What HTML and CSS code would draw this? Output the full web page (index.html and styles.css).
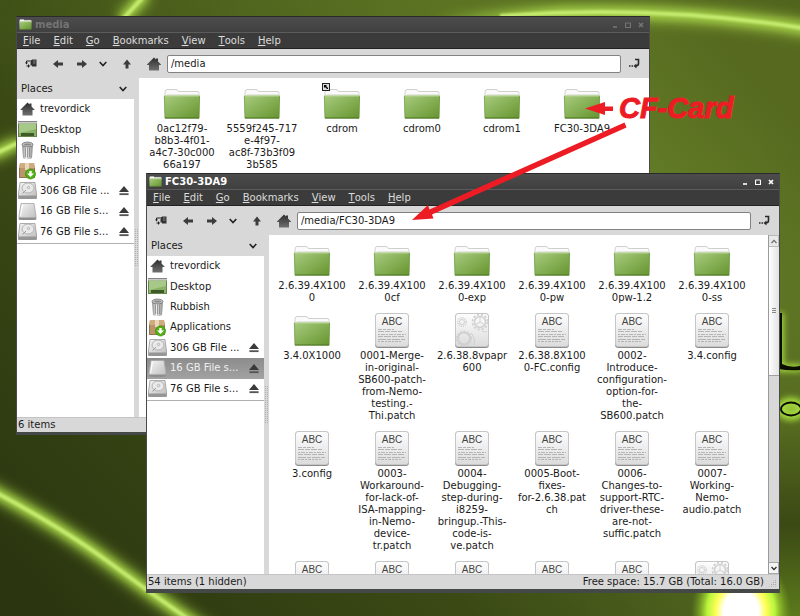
FILE: index.html
```html
<!DOCTYPE html>
<html lang="en">
<head>
<meta charset="utf-8">
<title>File Manager</title>
<link rel="stylesheet" href="styles.css">
</head>
<body>
<svg class="sprite" aria-hidden="true">
  <defs>
    <linearGradient id="g-folder" x1="0" y1="0" x2="1" y2="1"><stop offset="0" stop-color="#a9cc82"/><stop offset=".5" stop-color="#86b055"/><stop offset="1" stop-color="#66932f"/></linearGradient>
    <linearGradient id="g-paper" x1="0" y1="0" x2="0" y2="1"><stop offset="0" stop-color="#fdfdfd"/><stop offset="1" stop-color="#dcdcdc"/></linearGradient>
    <linearGradient id="g-home" x1="0" y1="0" x2="0" y2="1"><stop offset="0" stop-color="#2c2c2c"/><stop offset="1" stop-color="#707070"/></linearGradient>
    <linearGradient id="g-metal" x1="0" y1="0" x2="1" y2="0"><stop offset="0" stop-color="#888"/><stop offset=".4" stop-color="#eee"/><stop offset="1" stop-color="#888"/></linearGradient>
    <linearGradient id="g-drive" x1="0" y1="0" x2="1" y2="1"><stop offset="0" stop-color="#f6f6f6"/><stop offset="1" stop-color="#bcbcbc"/></linearGradient>
  </defs>
  <symbol id="folder" viewBox="0 0 38 36">
    <path d="M2 10V6.500Q2 3.500 4 3.500H13Q14.500 3.500 15.500 5.500H35Q36 5.500 36 7.500V12H2Z" fill="#fafafa" stroke="#cfcfcf"/>
    <path d="M4 8.500H35" stroke="#e6e6e6"/>
    <path d="M.800 10.500Q.800 9.500 2 9.500H36Q37 9.500 37 10.500L36.300 32.500H1.700Z" fill="url(#g-folder)"/>
    <path d="M1.500 10H36.500" stroke="#b9d696"/>
    <path d="M2 32H36" stroke="#4d7424"/>
    <path d="M1.500 10L2 32M36.500 10L36 32" stroke="#6b8f42" stroke-opacity=".5" fill="none"/>
  </symbol>
  <symbol id="paper" viewBox="0 0 38 36">
    <rect x="2" y="1" width="34" height="34" rx="3.500" fill="#8b8b8b"/>
    <rect x="2" y="0" width="34" height="34" rx="3.500" fill="#c6c6c6"/>
    <rect x="3" y="1" width="32" height="32" rx="2.500" fill="url(#g-paper)"/>
  </symbol>
  <symbol id="textfile" viewBox="0 0 38 36">
    <use href="#paper"/>
    <g stroke="#b4b4b4" stroke-width="1" fill="none">
      <path d="M5 16.500H21" stroke-dasharray="4 1 3 1"/><path d="M5 18.500H29" stroke-dasharray="6 1 5 1"/><path d="M5 21.500H33" stroke-dasharray="2 1 4 1"/><path d="M5 23.500H31" stroke-dasharray="5 1 7 1"/><path d="M5 26.500H32" stroke-dasharray="8 1 4 1"/><path d="M5 28.500H28" stroke-dasharray="2 1 3 1"/>
    </g>
  </symbol>
  <symbol id="binary" viewBox="0 0 38 36">
    <use href="#paper"/>
    <g fill="none" stroke="#d0d0d0">
      <circle cx="9" cy="9" r="2.500"/><circle cx="9" cy="9" r="4.200" stroke-dasharray="1 1.200" stroke-width="1.800"/>
      <circle cx="27" cy="9" r="5.500" stroke-width="1.500"/><circle cx="27" cy="9" r="7.500" stroke-dasharray="2.200 1.800" stroke-width="1.800"/><path d="M27 9V3.500M27 9L32 12M27 9L22 12"/>
      <circle cx="11" cy="25.500" r="6" stroke-width="2"/><circle cx="11" cy="25.500" r="7.400" stroke-dasharray="1.800 1.600" stroke-width="1.400"/>
      <path d="M21 32Q23 26 18 20M29 18Q32 20 34 18"/>
    </g>
  </symbol>
  <symbol id="home" viewBox="0 0 14 14"><path d="M7 .500L0 7.500V8H2V13.500H12V8H14V7.500L11 4.500V1.500H9V2.500Z" fill="url(#g-home)"/></symbol>
  <symbol id="connect" viewBox="0 0 12 10"><path d="M5.500 1.500H7V1H11.500V8H7V7H5.500Z" fill="#333"/><path d="M8 2.500H10.500M8 4.500H10.500" stroke="#999" stroke-width=".8"/><path d="M5 2.500H1.500V5M1.500 7.500H5M3.500 6V9" stroke="#222" fill="none"/><path d="M0 4H3L1.500 6Z" fill="#222"/></symbol>
  <symbol id="left" viewBox="0 0 10 10"><path d="M0 5L5 1V3.500H10V6.500H5V9Z" fill="#3c3c3c"/></symbol>
  <symbol id="right" viewBox="0 0 10 10"><path d="M10 5L5 1V3.500H0V6.500H5V9Z" fill="#3c3c3c"/></symbol>
  <symbol id="up" viewBox="0 0 10 10"><path d="M5 .500L9 5.500H6.500V9.500H3.500V5.500H1Z" fill="#3c3c3c"/></symbol>
  <symbol id="down" viewBox="0 0 8 6"><path d="M.700 1L4 4.500L7.300 1" fill="none" stroke="#222" stroke-width="1.600"/></symbol>
  <symbol id="go" viewBox="0 0 12 10"><path d="M6 1H9.500V5Q9.500 7.500 6.500 7.500" fill="none" stroke="#2a2a2a" stroke-width="1.600"/><path d="M7.500 5V10L4.500 7.500Z" fill="#2a2a2a"/><path d="M0 7.500H1.500M2.500 7.500H4" stroke="#2a2a2a" stroke-width="1.500"/></symbol>
  <symbol id="desktop" viewBox="0 0 19 19"><rect x=".5" y="1.500" width="18" height="15" fill="#8ab267" stroke="#67864c"/><path d="M1 4H18V9L1 13Z" fill="#a6c988"/><rect x="0" y="1" width="19" height="2.500" fill="#c8c8c8"/><path d="M0 1.500H19" stroke="#858585"/><rect x="3" y="13" width="13" height="3" fill="#3d5a28"/></symbol>
  <symbol id="trash" viewBox="0 0 19 19"><path d="M4 3L5 17Q9.500 19.500 14 17L15 3Z" fill="url(#g-metal)"/><path d="M7.500 6.500V16M9.500 6.500V16.500M11.500 6.500V16" stroke="#888" stroke-width=".8"/><ellipse cx="9.500" cy="3.500" rx="5.500" ry="2.400" fill="#c4c4c4" stroke="#6e6e6e" stroke-width=".8"/><ellipse cx="9.500" cy="3.500" rx="3.500" ry="1.100" fill="#8a8a8a"/></symbol>
  <symbol id="apps" viewBox="0 0 19 19"><path d="M2 2H16L17 7V17H1V7Z" fill="#b9966a"/><path d="M2 2H16L17 7H1Z" fill="#cfac80"/><path d="M7 2H11V9H7Z" fill="#e8d7b8"/><path d="M1.500 7V16.500H16.500V7" fill="none" stroke="#94744c"/><circle cx="12.500" cy="13" r="5" fill="#55b016" stroke="#3c8a0a" stroke-width=".7"/><path d="M11.300 10H13.700V12.500H16L12.500 16L9 12.500H11.300Z" fill="#fff"/></symbol>
  <symbol id="card" viewBox="0 0 19 19"><path d="M3 1.500H16L18 14V17.500H1V14Z" fill="url(#g-drive)" stroke="#a5a5a5" stroke-width=".8"/><path d="M1 15.500H18V17.500Q9 18.500 1 17.500Z" fill="#8e8e8e"/><path d="M4.500 3L2.500 14" stroke="#fff"/></symbol>
  <symbol id="disk" viewBox="0 0 19 19"><path d="M2 1.500H17L18.500 13V17.500H.500V13Z" fill="url(#g-drive)" stroke="#9a9a9a" stroke-width=".8"/><path d="M.500 14.500H18.500V17.500Q9 18.500 .500 17.500Z" fill="#969696"/><ellipse cx="10" cy="7" rx="6" ry="5" fill="#e9e9e9" stroke="#b4b4b4"/><circle cx="10.500" cy="6.500" r="1.200" fill="none" stroke="#aaa" stroke-width=".8"/><path d="M8 9L4.500 12.500" stroke="#999" fill="none"/></symbol>
  <symbol id="eject" viewBox="0 0 12 12"><path d="M6 1L11.500 7.500H.500Z" fill="#3a3a3a"/><rect x="1" y="9" width="10" height="2" fill="#555"/></symbol>
  <symbol id="min" viewBox="0 0 6 6"><path d="M1 5H5" stroke="currentColor" stroke-width="1.600"/></symbol>
  <symbol id="max" viewBox="0 0 6 6"><path d="M.500 1H5.500M.500 1V5.500H5.500V1" fill="none" stroke="currentColor" stroke-width="1.200"/></symbol>
  <symbol id="close" viewBox="0 0 6 6"><path d="M1 1L5 5M5 1L1 5" stroke="currentColor" stroke-width="1.700"/></symbol>
</svg>

<svg class="wallpaper" viewBox="0 0 800 616" preserveAspectRatio="none" aria-hidden="true">
  <defs>
    <linearGradient id="w-base" x1="0" y1=".9" x2="1" y2=".2"><stop offset="0" stop-color="#2b3610"/><stop offset=".35" stop-color="#3b4a15"/><stop offset=".8" stop-color="#647f28"/><stop offset="1" stop-color="#56691f"/></linearGradient>
    <linearGradient id="w-top" x1="0" y1="0" x2="1" y2="0"><stop offset="0" stop-color="#3f5016"/><stop offset=".5" stop-color="#566c20"/><stop offset="1" stop-color="#4e611c"/></linearGradient>
    <linearGradient id="w-right" x1="0" y1="0" x2="0" y2="1"><stop offset="0" stop-color="#5a7123" stop-opacity="0"/><stop offset=".55" stop-color="#55691f"/><stop offset=".78" stop-color="#3b4914"/><stop offset="1" stop-color="#5c7a1c"/></linearGradient>
    <linearGradient id="w-arc" gradientUnits="userSpaceOnUse" x1="430" y1="0" x2="560" y2="0"><stop offset="0" stop-color="#90b83a" stop-opacity="0"/><stop offset="1" stop-color="#9cc643"/></linearGradient>
    <radialGradient id="w-flare"><stop offset="0" stop-color="#fff"/><stop offset=".35" stop-color="#fff"/><stop offset=".5" stop-color="#ffff58"/><stop offset=".68" stop-color="#b8f53a"/><stop offset="1" stop-color="#7aa51f" stop-opacity="0"/></radialGradient>
    <filter id="b8" x="-50%" y="-50%" width="200%" height="200%"><feGaussianBlur stdDeviation="7"/></filter>
    <filter id="b3" x="-50%" y="-50%" width="200%" height="200%"><feGaussianBlur stdDeviation="3"/></filter>
    <filter id="b1" x="-50%" y="-50%" width="200%" height="200%"><feGaussianBlur stdDeviation="1"/></filter>
  </defs>
  <rect width="800" height="616" fill="url(#w-base)"/>
  <rect width="800" height="16" fill="url(#w-top)" opacity=".6"/>
  <rect x="780" y="200" width="20" height="416" fill="url(#w-right)"/>
  <g fill="none">
    <g stroke="#90b83a" stroke-width="14" filter="url(#b8)"><path d="M122 20L146 -6M-10 156L20 142M-20 484Q60 526 110 563T210 634"/><path d="M430 22Q640 -1 820 31" stroke="url(#w-arc)"/></g>
    <g stroke="#9cc643" stroke-width="9" filter="url(#b3)"><path d="M122 20L146 -6M-10 156L20 142M-20 484Q60 526 110 563T210 634"/><path d="M430 22Q640 -1 820 31" stroke="url(#w-arc)"/></g>
    <path d="M122 20L146 -6M-10 156L20 142M-20 484Q60 526 110 563T210 634M500 16Q660 3 820 31" stroke="#c6ec70" stroke-width="4" filter="url(#b1)"/>
  </g>
  <ellipse cx="741" cy="612" rx="50" ry="60" fill="url(#w-flare)"/>
  <g filter="url(#b3)" fill="none" stroke="#a9e23c" stroke-width="7"><path d="M780 313V368L802 368"/><ellipse cx="791" cy="409" rx="11" ry="8" fill="#8fb838"/></g>
  <path d="M779 313H782V364Q790 368 800 366V370Q788 371 779 369Z" fill="#0a0d02"/>
  <ellipse cx="791" cy="409" rx="10" ry="6.500" fill="none" stroke="#0a0d02" stroke-width="1.800"/>
</svg>

<section class="window window-back inactive" aria-label="media">
  <header class="titlebar">
    <svg class="title-icon"><use href="#folder"/></svg><h1>media</h1>
    <div class="controls"><button aria-label="Minimise"><svg><use href="#min"/></svg></button><button aria-label="Maximise"><svg><use href="#max"/></svg></button><button aria-label="Close"><svg><use href="#close"/></svg></button></div>
  </header>
  <nav class="menubar"><button><u>F</u>ile</button><button><u>E</u>dit</button><button><u>G</u>o</button><button><u>B</u>ookmarks</button><button><u>V</u>iew</button><button><u>T</u>ools</button><button><u>H</u>elp</button></nav>
  <form class="toolbar">
    <button type="button" aria-label="Connect"><svg class="i12"><use href="#connect"/></svg></button><button type="button" aria-label="Back"><svg class="i10"><use href="#left"/></svg></button><button type="button" aria-label="Forward"><svg class="i10"><use href="#right"/></svg></button><button type="button" aria-label="History"><svg class="i8"><use href="#down"/></svg></button><button type="button" aria-label="Up"><svg class="i10"><use href="#up"/></svg></button><button type="button" aria-label="Home"><svg class="i14"><use href="#home"/></svg></button>
    <input type="text" aria-label="Location" value="/media">
    <button type="button" aria-label="Go"><svg class="i12"><use href="#go"/></svg></button>
  </form>
  <div class="panes">
    <aside class="sidebar">
      <button class="places">Places<svg class="i8"><use href="#down"/></svg></button>
      <ul>
        <li><svg class="i14"><use href="#home"/></svg><a href="#home">trevordick</a></li>
        <li><svg><use href="#desktop"/></svg><a href="#desktop">Desktop</a></li>
        <li><svg><use href="#trash"/></svg><a href="#trash">Rubbish</a></li>
        <li><svg><use href="#apps"/></svg><a href="#apps">Applications</a></li>
        <li><svg><use href="#disk"/></svg><a href="#disk">306 GB File ...</a><button aria-label="Eject"><svg class="i12"><use href="#eject"/></svg></button></li>
        <li><svg><use href="#card"/></svg><a href="#card">16 GB File s...</a><button aria-label="Eject"><svg class="i12"><use href="#eject"/></svg></button></li>
        <li><svg><use href="#disk"/></svg><a href="#disk">76 GB File s...</a><button aria-label="Eject"><svg class="i12"><use href="#eject"/></svg></button></li>
      </ul>
    </aside>
    <div class="gutter"><i></i></div>
    <main class="files">
      <figure><svg><use href="#folder"/></svg><figcaption>0ac12f79-<br>b8b3-4f01-<br>a4c7-30c000<br>66a197</figcaption></figure>
      <figure><svg><use href="#folder"/></svg><figcaption>5559f245-717<br>e-4f97-<br>ac8f-73b3f09<br>3b585</figcaption></figure>
      <figure><svg><use href="#folder"/></svg><svg class="link-badge" viewBox="0 0 8 8"><rect width="8" height="8" fill="#222"/><rect x="1" y="1" width="6" height="6" fill="#ddd"/><path d="M2 2H5L4 3L6 5V6H5L3 4L2 5Z" fill="#000"/></svg><figcaption>cdrom</figcaption></figure>
      <figure><svg><use href="#folder"/></svg><figcaption>cdrom0</figcaption></figure>
      <figure><svg><use href="#folder"/></svg><figcaption>cdrom1</figcaption></figure>
      <figure><svg><use href="#folder"/></svg><figcaption>FC30-3DA9</figcaption></figure>
    </main>
  </div>
  <footer class="status"><span>6 items</span></footer>
</section>

<section class="window window-front" aria-label="FC30-3DA9">
  <header class="titlebar">
    <svg class="title-icon"><use href="#folder"/></svg><h1>FC30-3DA9</h1>
    <div class="controls"><button aria-label="Minimise"><svg><use href="#min"/></svg></button><button aria-label="Maximise"><svg><use href="#max"/></svg></button><button aria-label="Close"><svg><use href="#close"/></svg></button></div>
  </header>
  <nav class="menubar"><button><u>F</u>ile</button><button><u>E</u>dit</button><button><u>G</u>o</button><button><u>B</u>ookmarks</button><button><u>V</u>iew</button><button><u>T</u>ools</button><button><u>H</u>elp</button></nav>
  <form class="toolbar">
    <button type="button" aria-label="Connect"><svg class="i12"><use href="#connect"/></svg></button><button type="button" aria-label="Back"><svg class="i10"><use href="#left"/></svg></button><button type="button" aria-label="Forward"><svg class="i10"><use href="#right"/></svg></button><button type="button" aria-label="History"><svg class="i8"><use href="#down"/></svg></button><button type="button" aria-label="Up"><svg class="i10"><use href="#up"/></svg></button><button type="button" aria-label="Home"><svg class="i14"><use href="#home"/></svg></button>
    <input type="text" aria-label="Location" value="/media/FC30-3DA9">
    <button type="button" aria-label="Go"><svg class="i12"><use href="#go"/></svg></button>
  </form>
  <div class="panes">
    <aside class="sidebar">
      <button class="places">Places<svg class="i8"><use href="#down"/></svg></button>
      <ul>
        <li><svg class="i14"><use href="#home"/></svg><a href="#home">trevordick</a></li>
        <li><svg><use href="#desktop"/></svg><a href="#desktop">Desktop</a></li>
        <li><svg><use href="#trash"/></svg><a href="#trash">Rubbish</a></li>
        <li><svg><use href="#apps"/></svg><a href="#apps">Applications</a></li>
        <li><svg><use href="#disk"/></svg><a href="#disk">306 GB File ...</a><button aria-label="Eject"><svg class="i12"><use href="#eject"/></svg></button></li>
        <li class="selected"><svg><use href="#card"/></svg><a href="#card">16 GB File s...</a><button aria-label="Eject"><svg class="i12"><use href="#eject"/></svg></button></li>
        <li><svg><use href="#disk"/></svg><a href="#disk">76 GB File s...</a><button aria-label="Eject"><svg class="i12"><use href="#eject"/></svg></button></li>
      </ul>
    </aside>
    <div class="gutter"><i></i></div>
    <main class="files">
      <figure><svg><use href="#folder"/></svg><figcaption>2.6.39.4X100<br>0</figcaption></figure>
      <figure><svg><use href="#folder"/></svg><figcaption>2.6.39.4X100<br>0cf</figcaption></figure>
      <figure><svg><use href="#folder"/></svg><figcaption>2.6.39.4X100<br>0-exp</figcaption></figure>
      <figure><svg><use href="#folder"/></svg><figcaption>2.6.39.4X100<br>0-pw</figcaption></figure>
      <figure><svg><use href="#folder"/></svg><figcaption>2.6.39.4X100<br>0pw-1.2</figcaption></figure>
      <figure><svg><use href="#folder"/></svg><figcaption>2.6.39.4X100<br>0-ss</figcaption></figure>
      <figure><svg><use href="#folder"/></svg><figcaption>3.4.0X1000</figcaption></figure>
      <figure><svg><use href="#textfile"/></svg><span class="abc">ABC</span><figcaption>0001-Merge-<br>in-original-<br>SB600-patch-<br>from-Nemo-<br>testing.-<br>Thi.patch</figcaption></figure>
      <figure><svg><use href="#binary"/></svg><figcaption>2.6.38.8vpapr<br>600</figcaption></figure>
      <figure><svg><use href="#textfile"/></svg><span class="abc">ABC</span><figcaption>2.6.38.8X100<br>0-FC.config</figcaption></figure>
      <figure><svg><use href="#textfile"/></svg><span class="abc">ABC</span><figcaption>0002-<br>Introduce-<br>configuration-<br>option-for-<br>the-<br>SB600.patch</figcaption></figure>
      <figure><svg><use href="#textfile"/></svg><span class="abc">ABC</span><figcaption>3.4.config</figcaption></figure>
      <figure><svg><use href="#textfile"/></svg><span class="abc">ABC</span><figcaption>3.config</figcaption></figure>
      <figure><svg><use href="#textfile"/></svg><span class="abc">ABC</span><figcaption>0003-<br>Workaround-<br>for-lack-of-<br>ISA-mapping-<br>in-Nemo-<br>device-<br>tr.patch</figcaption></figure>
      <figure><svg><use href="#textfile"/></svg><span class="abc">ABC</span><figcaption>0004-<br>Debugging-<br>step-during-<br>i8259-<br>bringup.-This-<br>code-is-<br>ve.patch</figcaption></figure>
      <figure><svg><use href="#textfile"/></svg><span class="abc">ABC</span><figcaption>0005-Boot-<br>fixes-<br>for-2.6.38.pat<br>ch</figcaption></figure>
      <figure><svg><use href="#textfile"/></svg><span class="abc">ABC</span><figcaption>0006-<br>Changes-to-<br>support-RTC-<br>driver-these-<br>are-not-<br>suffic.patch</figcaption></figure>
      <figure><svg><use href="#textfile"/></svg><span class="abc">ABC</span><figcaption>0007-<br>Working-<br>Nemo-<br>audio.patch</figcaption></figure>
      <figure><svg><use href="#textfile"/></svg><span class="abc">ABC</span></figure>
      <figure><svg><use href="#textfile"/></svg><span class="abc">ABC</span></figure>
      <figure><svg><use href="#textfile"/></svg><span class="abc">ABC</span></figure>
      <figure><svg><use href="#textfile"/></svg><span class="abc">ABC</span></figure>
      <figure><svg><use href="#textfile"/></svg><span class="abc">ABC</span></figure>
      <figure><svg><use href="#binary"/></svg></figure>
    </main>
    <div class="scrollbar">
      <button class="faded" aria-label="Scroll up"><svg class="flip"><use href="#down"/></svg></button>
      <div class="track"><div class="thumb"><i></i></div></div>
      <button aria-label="Scroll down"><svg><use href="#down"/></svg></button>
    </div>
  </div>
  <footer class="status"><span>54 items (1 hidden)</span><span class="space">Free space: 15.7 GB (Total: 16.0 GB)</span><i class="grip"></i></footer>
</section>

<svg class="annotation" viewBox="0 0 800 616" role="img" aria-label="CF-Card">
  <g fill="#ed1c24" stroke="none">
    <path d="M585 108.500L605 102V106.500H613V111H605V115Z"/>
    <path d="M412 220L428 205L429.500 209.500L624.500 122.500L626.500 127.500L432 214.500L433.500 218.500Z"/>
    <text x="619" y="118" class="note">CF-Card</text>
  </g>
</svg>
</body>
</html>
```
FILE: styles.css
```css
* { box-sizing: border-box; }
html, body { height: 100%; }
body {
  margin: 0;
  position: relative;
  overflow: hidden;
  font: 10px/12px "DejaVu Sans", sans-serif;
  color: #1a1a1a;
  background: #3b4a15;
}
button {
  font: inherit;
  color: inherit;
  background: none;
  border: 0;
  padding: 0;
  display: flex;
  align-items: center;
  justify-content: center;
}
svg { display: block; flex: none; }
.sprite { position: absolute; width: 0; height: 0; }
.wallpaper { position: absolute; inset: 0; width: 100%; height: 100%; }
.annotation { position: absolute; top: 0; left: 0; width: 800px; height: 616px; pointer-events: none; }
.note { font: italic bold 29px "Liberation Sans", sans-serif; stroke: #ed1c24; stroke-width: 1; }

.i8 { width: 8px; height: 6px; }
.i10 { width: 10px; height: 10px; }
.i12 { width: 12px; height: 11px; }
.i14 { width: 14px; height: 14px; }

/* windows */
.window {
  position: absolute;
  display: flex;
  flex-direction: column;
  background: #d8d8d8;
  border: 1px solid #4a4a4a;
  border-top-color: #2a2a2a;
  border-bottom: 4px solid #444847;
}
.window-back { top: 16px; left: 16px; right: 150px; bottom: 181px; border-bottom-width: 3px; }
.window-front { top: 173px; left: 146px; right: 20px; bottom: 23px; }

.titlebar {
  display: flex;
  align-items: center;
  height: 15px;
  padding: 0 5px 0 2px;
  gap: 3px;
  color: #fff;
  background: linear-gradient(#4c4c4c, #404040);
}
.title-icon { width: 13px; height: 13px; }
h1 { margin: 0; flex: 1; font: bold 10px/12px "DejaVu Sans", sans-serif; }
.controls { display: flex; gap: 7px; }
.controls svg { width: 6px; height: 6px; }
.inactive .titlebar { color: #747474; }

.menubar {
  display: flex;
  align-items: center;
  gap: 13px;
  height: 17px;
  padding-left: 6px;
  color: #dcdcdc;
  background: #3b3b3b;
  border-top: 1px solid #5c5c5c;
  border-bottom: 1px solid #222;
}

.toolbar {
  display: grid;
  grid-template-columns: 28px 25px 23px 19px 30px 23px 1fr 28px;
  align-items: center;
  height: 29px;
}
.toolbar input {
  justify-self: end;
  width: calc(100% - 2px);
  height: 18px;
  padding: 0 3px;
  font: inherit;
  color: inherit;
  background: #fff;
  border: 1px solid #828282;
  border-radius: 2px;
}

.panes { flex: 1; min-height: 0; display: flex; background: #fff; }
.sidebar { width: 117px; }
.places {
  width: 100%;
  height: 21px;
  padding: 0 7px 0 4px;
  justify-content: space-between;
  background: #d8d8d8;
}
.sidebar ul {
  display: flex;
  flex-direction: column;
  height: 145px;
  margin: 0;
  padding: 0 0 1px;
  list-style: none;
  border-bottom: 1px solid #b0b0b0;
}
.sidebar li {
  flex: 1;
  display: flex;
  align-items: center;
  gap: 3px;
  padding: 0 4px 0 1px;
}
.sidebar li > svg { width: 19px; height: 19px; }
.sidebar li > .i14 { height: 14px; }
.sidebar a { flex: 1; color: inherit; text-decoration: none; white-space: nowrap; }
.sidebar .selected { color: #f0f0f0; background: linear-gradient(#8c8c8c, #a2a2a2); }
.gutter { width: 5px; display: flex; align-items: center; background: #d8d8d8; }
.gutter i { width: 4px; height: 38px; background: conic-gradient(#b0b0b0 25%, transparent 0) 0 0 / 2px 2px; }

.files {
  flex: 1;
  display: grid;
  grid-template-columns: repeat(auto-fill, 80px);
  align-content: start;
  row-gap: 9px;
  padding: 8px 0 0 3px;
  overflow: hidden;
}
figure { position: relative; margin: 0; display: flex; flex-direction: column; align-items: center; }
figure svg { width: 38px; height: 36px; }
figure > svg:first-child { margin-bottom: 1px; }
figcaption { text-align: center; white-space: nowrap; }
figure .link-badge { position: absolute; top: -3px; left: 20px; width: 8px; height: 8px; }
.abc {
  position: absolute;
  top: 3px;
  left: 0;
  right: 0;
  text-align: center;
  font: 10px/12px "Liberation Sans", sans-serif;
  color: #444;
}

.scrollbar { width: 11px; display: flex; flex-direction: column; background: #d8d8d8; border-left: 1px solid #9a9a9a; }
.scrollbar button { height: 12px; background: #f4f4f4; border: 1px solid #a8a8a8; border-left: 0; }
.scrollbar svg { width: 6px; height: 5px; }
.flip { transform: rotate(180deg); }
.faded { opacity: .6; }
.track { flex: 1; }
.thumb { height: 41%; display: flex; align-items: center; justify-content: center; background: linear-gradient(90deg, #fff, #e2e2e2); border-bottom: 1px solid #a0a0a0; }
.thumb i { width: 4px; height: 6px; background: repeating-linear-gradient(#888 0 1px, transparent 1px 2px); }

.status {
  display: flex;
  align-items: center;
  height: 15px;
  padding: 0 2px 0 1px;
  background: #d8d8d8;
  border-top: 1px solid #c4c4c4;
}
.space { margin-left: auto; }
.grip { width: 9px; height: 9px; margin-left: 4px; background: conic-gradient(#a8a8a8 25%, transparent 0) 0 0 / 2px 2px; clip-path: polygon(100% 0, 100% 100%, 0 100%); }
```
